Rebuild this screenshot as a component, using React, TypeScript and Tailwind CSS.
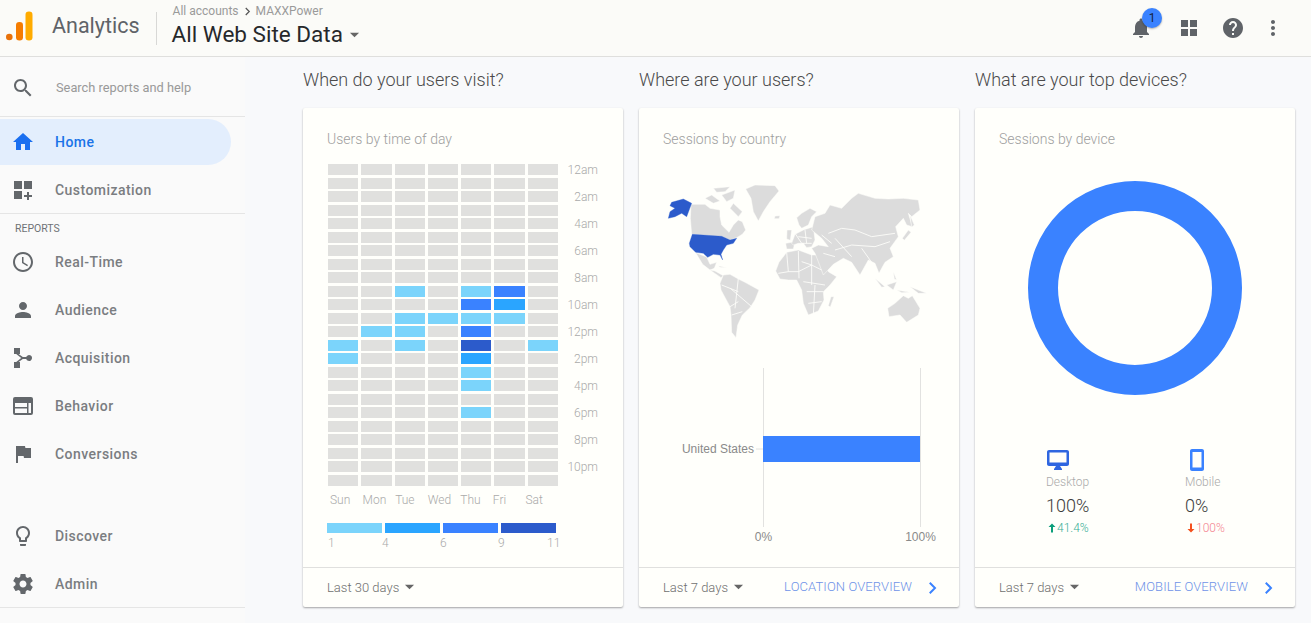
import type { ReactNode } from "react";

const icons = {
  search: "M15.5 14h-.79l-.28-.27C15.41 12.59 16 11.11 16 9.5 16 5.91 13.09 3 9.5 3S3 5.91 3 9.5 5.91 16 9.5 16c1.61 0 3.09-.59 4.23-1.57l.27.28v.79l5 4.99L20.49 19l-4.99-5zm-6 0C7.01 14 5 11.99 5 9.5S7.01 5 9.5 5 14 7.01 14 9.5 11.99 14 9.5 14z",
  home: "M10 20v-6h4v6h5v-8h3L12 3 2 12h3v8z",
  customize: "M3 3h8v8H3zM13 3h8v8h-8zM3 13h8v8H3zM16 14h2v3h3v2h-3v3h-2v-3h-3v-2h3z",
  clock: "M11.99 2C6.47 2 2 6.48 2 12s4.47 10 9.99 10C17.52 22 22 17.52 22 12S17.52 2 11.99 2zM12 20c-4.42 0-8-3.58-8-8s3.58-8 8-8 8 3.58 8 8-3.58 8-8 8zM12.5 7H11v6l5.25 3.15.75-1.23-4.5-2.67z",
  person: "M12 12c2.21 0 4-1.79 4-4s-1.79-4-4-4-4 1.79-4 4 1.79 4 4 4zm0 2c-2.67 0-8 1.34-8 4v2h16v-2c0-2.66-5.33-4-8-4z",
  acquisition: "M3 2h6v6H7.6l4.2 3h3.4a3 3 0 1 1 0 2h-3.4l-4.2 3H9v6H3v-6h2.2l5-4-5-4H3z",
  behavior: "M4 3h16a2 2 0 0 1 2 2v14a2 2 0 0 1-2 2H4a2 2 0 0 1-2-2V5a2 2 0 0 1 2-2zM4 9v4h12V9zM4 14.5V19h12v-4.5zM17.5 9v10H20V9z",
  flag: "M14.4 6L14 4H5v17h2v-7h5.6l.4 2h7V6z",
  bulb: "M9 21c0 .55.45 1 1 1h4c.55 0 1-.45 1-1v-1H9v1zm3-19C8.14 2 5 5.14 5 9c0 2.38 1.19 4.47 3 5.74V17c0 .55.45 1 1 1h6c.55 0 1-.45 1-1v-2.26c1.81-1.27 3-3.36 3-5.74 0-3.86-3.14-7-7-7zm2.85 11.1l-.85.6V16h-4v-2.3l-.85-.6C7.8 12.16 7 10.63 7 9c0-2.76 2.24-5 5-5s5 2.24 5 5c0 1.63-.8 3.16-2.15 4.1z",
  gear: "M19.43 12.98c.04-.32.07-.64.07-.98s-.03-.66-.07-.98l2.11-1.65c.19-.15.24-.42.12-.64l-2-3.46c-.12-.22-.39-.3-.61-.22l-2.49 1c-.52-.4-1.08-.73-1.69-.98l-.38-2.65C14.46 2.18 14.25 2 14 2h-4c-.25 0-.46.18-.49.42l-.38 2.65c-.61.25-1.17.59-1.69.98l-2.49-1c-.23-.09-.49 0-.61.22l-2 3.46c-.13.22-.07.49.12.64l2.11 1.65c-.04.32-.07.65-.07.98s.03.66.07.98l-2.11 1.65c-.19.15-.24.42-.12.64l2 3.46c.12.22.39.3.61.22l2.49-1c.52.4 1.08.73 1.69.98l.38 2.65c.03.24.24.42.49.42h4c.25 0 .46-.18.49-.42l.38-2.65c.61-.25 1.17-.59 1.69-.98l2.49 1c.23.09.49 0 .61-.22l2-3.46c.12-.22.07-.49-.12-.64l-2.11-1.65zM12 15.5c-1.93 0-3.5-1.57-3.5-3.5s1.57-3.5 3.5-3.5 3.5 1.57 3.5 3.5-1.57 3.5-3.5 3.5z",
  bell: "M12 22c1.1 0 2-.9 2-2h-4c0 1.1.89 2 2 2zm6-6v-5c0-3.07-1.64-5.64-4.5-6.32V4c0-.83-.67-1.5-1.5-1.5s-1.5.67-1.5 1.5v.68C7.63 5.36 6 7.92 6 11v5l-2 2v1h16v-1l-2-2z",
  apps: "M4 4h7v7H4zM13 4h7v7h-7zM4 13h7v7H4zM13 13h7v7h-7z",
  help: "M12 2C6.48 2 2 6.48 2 12s4.48 10 10 10 10-4.48 10-10S17.52 2 12 2zm1 17h-2v-2h2v2zm2.07-7.75l-.9.92C13.45 12.9 13 13.5 13 15h-2v-.5c0-1.1.45-2.1 1.17-2.83l1.24-1.26c.37-.36.59-.86.59-1.41 0-1.1-.9-2-2-2s-2 .9-2 2H8c0-2.21 1.79-4 4-4s4 1.79 4 4c0 .88-.36 1.68-.93 2.25z",
  more: "M12 8c1.1 0 2-.9 2-2s-.9-2-2-2-2 .9-2 2 .9 2 2 2zm0 2c-1.1 0-2 .9-2 2s.9 2 2 2 2-.9 2-2-.9-2-2-2zm0 6c-1.1 0-2 .9-2 2s.9 2 2 2 2-.9 2-2-.9-2-2-2z",
  desktop: "M21 2H3c-1.1 0-2 .9-2 2v12c0 1.1.9 2 2 2h7l-2 3v1h8v-1l-2-3h7c1.1 0 2-.9 2-2V4c0-1.1-.9-2-2-2zm-.5 12.5h-17V4.5h17z",
  phone: "M17 1.01L7 1c-1.1 0-2 .9-2 2v18c0 1.1.9 2 2 2h10c1.1 0 2-.9 2-2V3c0-1.1-.9-1.99-2-1.99zM16.5 19.5h-9V4h9z",
  up: "M10 21h4V10h5L12 3 5 10h5z",
  down: "M10 3h4v11h5l-7 7-7-7h5z",
  chevron: "M9 5l7 7-7 7",
  caret: "M2 6h20L12 16z",
};

function Icon({ d, className }: { d: string; className?: string }) {
  return (
    <svg viewBox="0 0 24 24" className={className} fill="currentColor" fillRule="evenodd">
      <path d={d} />
    </svg>
  );
}

function NavItem({ icon, label, active }: { icon: string; label: string; active?: boolean }) {
  return (
    <div
      className={`flex h-[48px] items-center pl-[11px] text-[14px] font-medium tracking-[0.45px] ${
        active ? "text-[#1a73e8]" : "text-[#7a7d81]"
      }`}
    >
      <Icon d={icon} className={`h-6 w-6 shrink-0 ${active ? "text-[#1a6ff0]" : "text-[#63676b]"}`} />
      <span className="ml-[20px]">{label}</span>
    </div>
  );
}

function Header() {
  return (
    <header className="flex h-[57px] shrink-0 items-center border-b border-[#dfdfdd] bg-[#fbfbf8] pb-[6px]">
      <svg viewBox="0 0 27 30" className="ml-[6px] mt-[1px] h-[30px] w-[27px]">
        <circle cx="3.3" cy="26" r="3.3" fill="#e8710a" />
        <rect x="10" y="11" width="7" height="18.5" rx="3.3" fill="#f57c00" />
        <rect x="19.5" y="0.5" width="7" height="29" rx="3.3" fill="#ffab00" />
      </svg>
      <span className="ml-[19px] mt-[2px] text-[21.5px] text-[#5f6368]">Analytics</span>
      <div className="ml-[16px] mt-[6px] h-[33px] w-px bg-[#d8d8d6]" />
      <div className="ml-[15px] mt-[1px]">
        <div className="flex items-center pl-px text-[12px] leading-[14px] text-[#9a9a9a]">
          <span>All accounts</span>
          <svg viewBox="0 0 8 10" className="mx-[5px] h-[9px] w-[7px] text-[#555]" fill="none" stroke="currentColor" strokeWidth="1.4">
            <path d="M2 1l4 4-4 4" />
          </svg>
          <span>MAXXPower</span>
        </div>
        <div className="mt-[3px] flex items-center text-[22.5px] leading-[26px] text-[#26282b]">
          <span>All Web Site Data</span>
          <Icon d={icons.caret} className="ml-[6px] mt-[2px] h-[11px] w-[11px] text-[#666]" />
        </div>
      </div>
      <div className="ml-auto mt-[6px] flex items-center text-[#5f6368]">
        <div className="relative h-6 w-6">
          <Icon d={icons.bell} className="h-6 w-6" />
          <span className="absolute left-[13px] top-[-8px] flex h-5 w-5 items-center justify-center rounded-full bg-[#3a82ff] text-[12px] text-[#16233f] shadow-[0_1px_2px_rgba(0,0,0,0.3)]">
            1
          </span>
        </div>
        <Icon d={icons.apps} className="ml-[24px] h-6 w-6" />
        <Icon d={icons.help} className="ml-[20px] h-6 w-6" />
        <Icon d={icons.more} className="ml-[16px] mr-[26px] h-6 w-6" />
      </div>
    </header>
  );
}

function Sidebar() {
  return (
    <aside className="flex w-[245px] shrink-0 flex-col bg-[#fafafa]">
      <div className="flex h-[60px] items-center border-b border-[#e5e5e5] pl-[11px] pt-[2px] text-[#63676b]">
        <Icon d={icons.search} className="h-6 w-6" />
        <span className="ml-[21px] text-[12.8px] text-[#999]">Search reports and help</span>
      </div>
      <div className="mt-[2px] h-[46px] w-[231px] rounded-r-[23px] bg-[#e3eefd]">
        <div className="-mt-px">
          <NavItem icon={icons.home} label="Home" active />
        </div>
      </div>
      <div className="mt-px h-[48px] border-b border-[#e5e5e5]">
        <NavItem icon={icons.customize} label="Customization" />
      </div>
      <div className="pl-[15px] pt-[8px] text-[10.5px] leading-[13px] text-[#6f7276]">REPORTS</div>
      <div className="mt-[3px]">
        <NavItem icon={icons.clock} label="Real-Time" />
        <NavItem icon={icons.person} label="Audience" />
        <NavItem icon={icons.acquisition} label="Acquisition" />
        <NavItem icon={icons.behavior} label="Behavior" />
        <NavItem icon={icons.flag} label="Conversions" />
      </div>
      <div className="mt-[34px] h-[96px] border-b border-[#e5e5e5]">
        <NavItem icon={icons.bulb} label="Discover" />
        <NavItem icon={icons.gear} label="Admin" />
      </div>
    </aside>
  );
}

function Section({
  heading,
  title,
  range,
  link,
  children,
}: {
  heading: string;
  title: string;
  range: string;
  link?: string;
  children: ReactNode;
}) {
  return (
    <section className="w-[320px]">
      <h2 className="flex h-[51px] items-start pt-[12px] text-[18px] font-light leading-[22px] text-[#4a4a4a]">
        {heading}
      </h2>
      <div className="flex h-[499px] flex-col rounded-[2px] bg-[#fffffb] shadow-[0_1px_2px_rgba(0,0,0,0.35)]">
        <div className="pl-[24px] pt-[21px] text-[14px] font-light leading-[20px] text-[#9e9e9e]">{title}</div>
        <div className="flex-1">{children}</div>
        <div className="flex h-[40px] items-center border-t border-[#e0e0de] pl-[24px] pr-[18px] text-[13px] font-light text-[#6f6f6f]">
          <span>{range}</span>
          <Icon d={icons.caret} className="ml-[5px] h-[11px] w-[11px] text-[#666]" />
          {link && (
            <>
              <span className="-mt-px ml-auto text-[13px] font-light tracking-[0.1px] text-[#6f93e8]">{link}</span>
              <svg viewBox="0 0 24 24" className="ml-[11px] h-[18px] w-[18px] text-[#3a82ff]" fill="none" stroke="currentColor" strokeWidth="2.6">
                <path d={icons.chevron} />
              </svg>
            </>
          )}
        </div>
      </div>
    </section>
  );
}

const LIGHT = "bg-[#7bd4fb]";
const MID = "bg-[#2aa5ff]";
const BLUE = "bg-[#3a82ff]";
const DARK = "bg-[#2c5bcb]";

const active: Record<string, string> = {
  "9-2": LIGHT,
  "9-4": LIGHT,
  "9-5": BLUE,
  "10-4": BLUE,
  "10-5": MID,
  "11-2": LIGHT,
  "11-3": LIGHT,
  "11-4": LIGHT,
  "11-5": LIGHT,
  "12-1": LIGHT,
  "12-2": LIGHT,
  "12-4": BLUE,
  "13-0": LIGHT,
  "13-2": LIGHT,
  "13-4": DARK,
  "13-6": LIGHT,
  "14-0": LIGHT,
  "14-4": MID,
  "15-4": LIGHT,
  "16-4": LIGHT,
  "18-4": LIGHT,
};

const hours = ["12am", "2am", "4am", "6am", "8am", "10am", "12pm", "2pm", "4pm", "6pm", "8pm", "10pm"];
const days = ["Sun", "Mon", "Tue", "Wed", "Thu", "Fri", "Sat"];

function TimeOfDay() {
  return (
    <div className="pl-[24px] pt-[15px] font-light">
      <div className="flex">
        <div className="ml-px grid w-[230px] grid-cols-7 gap-x-[3px] gap-y-[2.5px]">
          {Array.from({ length: 24 * 7 }, (_, i) => {
            const key = `${Math.floor(i / 7)}-${i % 7}`;
            return <div key={key} className={`h-[11px] ${active[key] ?? "bg-[#e0e0de]"}`} />;
          })}
        </div>
        <div className="ml-[9px] w-[31px] text-right text-[12px] leading-[27px] text-[#aaa]">
          <div className="-mt-[7px]">
            {hours.map((h) => (
              <div key={h}>{h}</div>
            ))}
          </div>
        </div>
      </div>
      <div className="mt-[6px] grid w-[231px] grid-cols-7 pl-[3px] text-[12px] leading-[16px] text-[#aaa]">
        {days.map((d) => (
          <span key={d}>{d}</span>
        ))}
      </div>
      <div className="mt-[15px] flex w-[229px] gap-[3px]">
        {[LIGHT, MID, BLUE, DARK].map((c) => (
          <div key={c} className={`h-[10px] flex-1 ${c}`} />
        ))}
      </div>
      <div className="mt-[3px] grid w-[231px] grid-cols-[55px_58px_58px_49px_1fr] text-[12px] leading-[14px] text-[#aaa]">
        <span className="pl-px">1</span>
        <span>4</span>
        <span>6</span>
        <span>9</span>
        <span className="text-right">11</span>
      </div>
    </div>
  );
}

function WorldMap() {
  const land = [
    // north america
    "M108 88L150 88L165 100L195 105L195 125L200 150L222 172L235 150L250 135L262 140L272 165L262 178L245 188L225 195L210 188L200 185L110 178L106 130Z",
    "M150 70L170 60L195 78L175 85Z",
    "M200 60L240 45L235 70L215 80Z",
    "M175 40L225 35L210 50L185 52Z",
    "M235 85L262 110L250 125L225 100Z",
    "M272 42L300 30L360 32L372 48L345 80L325 110L310 138L295 110L288 70Z",
    "M360 123L375 122L372 131L358 131Z",
    "M122 233L155 246L165 268L185 262L178 280L165 285L143 268Z",
    "M165 285L180 288L205 302L198 308Z",
    "M190 272L215 278L195 277Z",
    // south america
    "M205 300L225 298L250 312L270 322L312 345L300 375L285 398L262 420L248 450L243 488L230 472L228 420L225 395L198 345L195 325Z",
    // africa
    "M372 262L395 232L430 225L470 240L498 240L520 290L545 305L525 330L505 350L507 375L490 408L460 420L445 385L440 345L425 315L400 315L375 312L362 288Z",
    "M528 365L537 365L526 396L520 392Z",
    // europe
    "M392 205L420 200L415 222L395 222Z",
    "M410 205L420 178L445 165L475 155L480 195L470 215L455 218L445 205L430 205L415 210Z",
    "M425 128L440 115L465 100L485 110L470 125L460 150L440 160L432 150Z",
    "M396 165L410 165L406 196L395 192Z",
    // asia
    "M470 165L480 125L510 115L525 90L560 100L590 70L610 55L660 70L700 72L745 70L790 75L795 105L770 125L760 115L772 155L755 150L745 130L722 155L730 185L705 220L715 245L690 262L680 280L672 295L660 265L640 255L615 300L590 262L565 250L535 268L505 300L490 260L480 235L470 220L490 210L520 215L500 190Z",
    "M765 120L778 150L770 156Z",
    "M760 165L768 172L748 196L742 190Z",
    // oceania
    "M698 400L720 385L745 362L760 370L772 362L795 400L790 420L755 442L735 420L702 425Z",
    "M660 310L690 335L680 337Z",
    "M695 330L725 320L715 345Z",
    "M725 345L765 352L740 353Z",
    "M765 335L815 355L790 355Z",
    "M715 290L725 315L718 312Z",
  ];
  const borders = [
    "M370 295L400 290L430 290L470 270L500 285M395 232L400 290M430 228L432 310M470 240L470 330M445 320L510 330M455 350L505 350M460 385L500 380M480 330L475 420M440 260L470 270",
    "M520 175L560 160L600 165L650 185L720 175M590 210L660 215L705 200M540 190L590 245M620 220L650 262M500 180L530 205M540 225L590 210M505 235L540 245",
    "M226 340L290 395M250 310L240 400M200 330L250 350M230 420L262 410M225 395L250 380",
    "M430 185L470 190M440 205L470 205M420 175L440 205M450 165L455 205",
  ];
  return (
    <svg viewBox="0 0 870 525" className="ml-[16px] mt-[26px] block h-[175px] w-[290px]">
      <g fill="#dcdcdc" stroke="#fffffb" strokeWidth="1.5" strokeLinejoin="round">
        {land.map((d) => (
          <path key={d} d={d} />
        ))}
      </g>
      <path d={borders.join("")} fill="none" stroke="#fffffb" strokeWidth="2.5" />
      <g fill="#2c5bcb" stroke="#2c5bcb" strokeWidth="1" strokeLinejoin="round">
        <path d="M50 82L85 72L110 85L95 125L80 115L60 125L40 130L45 110L60 100L45 92Z" />
        <path d="M112 178L200 184L210 188L225 195L245 190L235 205L215 210L205 225L198 238L203 255L195 240L175 238L158 247L145 235L122 232L105 215L103 205Z" />
      </g>
    </svg>
  );
}

function CountryChart() {
  return (
    <svg viewBox="0 0 320 185" className="mt-[10px] block h-[185px] w-[320px]">
      <path d="M124.5 8V167M281.5 8V167M117 89H124" stroke="#e2e2e0" strokeWidth="1" />
      <rect x="124" y="76" width="157" height="26" fill="#3a82ff" />
      <text x="115" y="93" textAnchor="end" className="fill-[#8a8a8a] text-[12px] font-['Liberation_Sans',sans-serif]">
        United States
      </text>
      <text x="124.5" y="181" textAnchor="middle" className="fill-[#8a8a8a] text-[12px] font-['Liberation_Sans',sans-serif]">
        0%
      </text>
      <text x="281.5" y="181" textAnchor="middle" className="fill-[#8a8a8a] text-[12px] font-['Liberation_Sans',sans-serif]">
        100%
      </text>
    </svg>
  );
}

function DeviceStat({
  icon,
  label,
  value,
  deltaIcon,
  delta,
  arrowClass,
  deltaClass,
  iconClass,
}: {
  icon: string;
  label: string;
  value: string;
  deltaIcon: string;
  delta: string;
  arrowClass: string;
  deltaClass: string;
  iconClass: string;
}) {
  return (
    <div className="font-light">
      <Icon d={icon} className={`h-6 w-6 ${iconClass}`} />
      <div className="mt-[2px] text-[12px] leading-[16px] text-[#aaa]">{label}</div>
      <div className="mt-[5px] text-[18px] leading-[22px] text-[#3c3c3c]">{value}</div>
      <div className={`mt-[4px] flex items-center text-[12px] leading-[14px] ${deltaClass}`}>
        <Icon d={deltaIcon} className={`h-3 w-3 ${arrowClass}`} />
        <span className="-ml-px">{delta}</span>
      </div>
    </div>
  );
}

function Devices() {
  return (
    <div>
      <svg viewBox="0 0 214 214" className="ml-[53px] mt-[32px] block h-[214px] w-[214px]">
        <circle cx="107" cy="107" r="92" fill="none" stroke="#3a82ff" strokeWidth="30" />
      </svg>
      <div className="ml-[71px] mt-[53px] grid grid-cols-[139px_1fr]">
        <DeviceStat
          icon={icons.desktop}
          label="Desktop"
          value="100%"
          deltaIcon={icons.up}
          delta="41.4%"
          arrowClass="text-[#0b9e7a]"
          deltaClass="text-[#35ad96]"
          iconClass="text-[#2f66e0]"
        />
        <DeviceStat
          icon={icons.phone}
          label="Mobile"
          value="0%"
          deltaIcon={icons.down}
          delta="100%"
          arrowClass="text-[#f4511e]"
          deltaClass="text-[#f4848f]"
          iconClass="text-[#3a82ff]"
        />
      </div>
    </div>
  );
}

export default function App() {
  return (
    <div className="flex h-[623px] w-[1311px] flex-col overflow-hidden bg-[#f8f9fb] font-[Roboto,sans-serif]">
      <Header />
      <div className="flex flex-1">
        <Sidebar />
        <main className="flex gap-4 pl-[58px]">
          <Section heading="When do your users visit?" title="Users by time of day" range="Last 30 days">
            <TimeOfDay />
          </Section>
          <Section heading="Where are your users?" title="Sessions by country" range="Last 7 days" link="LOCATION OVERVIEW">
            <WorldMap />
            <CountryChart />
          </Section>
          <Section heading="What are your top devices?" title="Sessions by device" range="Last 7 days" link="MOBILE OVERVIEW">
            <Devices />
          </Section>
        </main>
      </div>
    </div>
  );
}
